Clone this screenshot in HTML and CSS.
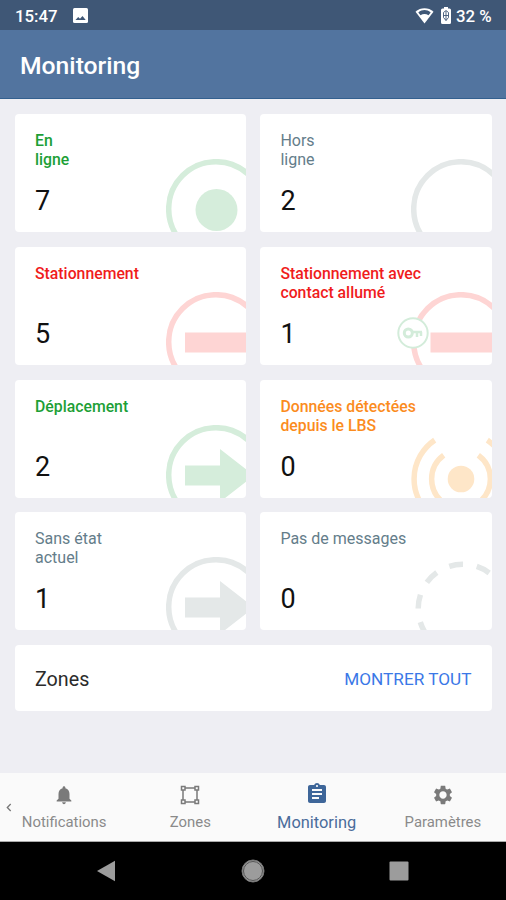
FILE: index.html
```html
<!DOCTYPE html>
<html lang="fr">
<head>
    <meta charset="UTF-8">
    <meta name="viewport" content="width=device-width, initial-scale=1.0">
    <title>Monitoring</title>
    <link rel="stylesheet" href="styles.css">
</head>
<body>
    <div class="status-bar">
        <span class="clock">15:47</span>
        <svg class="picture-icon" width="15" height="15" viewBox="0 0 15 15">
            <rect width="15" height="15" rx="1.5" fill="#fff"/>
            <path d="M2.5 12l2.700-3 1.800 1.700L9.500 8l3.200 4z" fill="#3f5776"/>
        </svg>
        <div class="status-right">
            <svg width="19" height="17" viewBox="0 0 19 17">
                <path d="M9.500 16.500L.5 4.800C5.500.2 13.500.2 18.500 4.800z" fill="#fff"/>
                <path d="M3.300 5.500c4-3.200 8.400-3.200 12.400 0l-2.200 2.700c-2.500-1.700-5.500-1.700-8 0z" fill="#3f5776"/>
            </svg>
            <svg class="battery" width="10" height="17" viewBox="0 0 10 17">
                <path d="M3 0h4v1.500h1.500q1.500 0 1.500 1.500v12.500q0 1.500-1.500 1.500h-7q-1.500 0-1.500-1.500v-12.500q0-1.500 1.500-1.500h1.500z" fill="#fff"/>
                <path d="M5 4v9.500M2.500 8.500h5M2.500 5.500v5l2.500 3 2.500-3v-5L5 3.500z" fill="none" stroke="#3f5776" stroke-width=".9"/>
            </svg>
            <span>32 %</span>
        </div>
    </div>

    <header class="header">
        <h1>Monitoring</h1>
    </header>

    <main class="content">
        <div class="cards">
            <div class="card green">
                <p class="label">En<br>ligne</p>
                <p class="value">7</p>
                <svg class="mark" viewBox="0 0 100 100">
                    <circle class="ring" cx="50" cy="50" r="47.300"/>
                    <circle cx="50.500" cy="51" r="21"/>
                </svg>
            </div>
            <div class="card gray">
                <p class="label">Hors<br>ligne</p>
                <p class="value">2</p>
                <svg class="mark" viewBox="0 0 100 100">
                    <circle class="ring" cx="50" cy="50" r="47.300"/>
                </svg>
            </div>
            <div class="card red">
                <p class="label">Stationnement</p>
                <p class="value">5</p>
                <svg class="mark" viewBox="0 0 100 100">
                    <circle class="ring" cx="50" cy="50" r="47.300"/>
                    <rect x="19" y="40.500" width="62" height="20"/>
                </svg>
            </div>
            <div class="card red">
                <p class="label">Stationnement avec<br>contact allumé</p>
                <p class="value">1</p>
                <svg class="mark" viewBox="0 0 100 100">
                    <circle class="ring" cx="50" cy="50" r="47.300"/>
                    <rect x="19.500" y="40.500" width="62" height="20"/>
                </svg>
                <svg class="key" viewBox="0 0 32 32">
                    <circle cx="16" cy="16" r="14.700" fill="#fff" stroke-width="2"/>
                    <circle cx="11.300" cy="16" r="4" fill="none" stroke-width="3"/>
                    <path d="M15 15h10M20 15v5M24 15v4" fill="none" stroke-width="2.500"/>
                </svg>
            </div>
            <div class="card green">
                <p class="label">Déplacement</p>
                <p class="value">2</p>
                <svg class="mark" viewBox="0 0 100 100">
                    <circle class="ring" cx="50" cy="50" r="47.300"/>
                    <path d="M19 40.500h35v-16.500l34 26.500-34 26.500v-16.500h-35z"/>
                </svg>
            </div>
            <div class="card orange">
                <p class="label">Données détectées<br>depuis le LBS</p>
                <p class="value">0</p>
                <svg class="mark" viewBox="0 0 100 100">
                    <circle cx="50" cy="54" r="13.300"/>
                    <path class="ring" d="M32.700 30.200a29.500 29.500 0 0 0 0 47.600M67.300 30.200a29.500 29.500 0 0 1 0 47.600"/>
                    <path class="ring" d="M23.700 15.100a47 47 0 0 0 0 77.800M76.300 15.100a47 47 0 0 1 0 77.800"/>
                </svg>
            </div>
            <div class="card gray">
                <p class="label">Sans état<br>actuel</p>
                <p class="value">1</p>
                <svg class="mark" viewBox="0 0 100 100">
                    <circle class="ring" cx="50" cy="50" r="47.300"/>
                    <path d="M19 40.500h35v-16.500l34 26.500-34 26.500v-16.500h-35z"/>
                </svg>
            </div>
            <div class="card gray">
                <p class="label">Pas de messages</p>
                <p class="value">0</p>
                <svg class="mark" viewBox="0 0 100 100">
                    <circle class="ring" cx="51.700" cy="51.700" r="44.500" stroke-dasharray="14 13.960"/>
                </svg>
            </div>
        </div>

        <div class="zones">
            <span>Zones</span>
            <a class="show-all">MONTRER TOUT</a>
        </div>
    </main>

    <nav class="tabs">
        <svg class="chevron" width="6" height="9" viewBox="0 0 6 9">
            <path d="M4.700 1L1.300 4.500l3.400 3.500" fill="none" stroke="#777" stroke-width="1.300"/>
        </svg>
        <div class="tab">
            <svg width="22" height="22" viewBox="0 0 24 24">
                <path d="M12 22c1.100 0 2-.9 2-2h-4c0 1.100.9 2 2 2zm6-6v-5c0-3.070-1.640-5.640-4.500-6.320V4c0-.83-.67-1.500-1.500-1.500s-1.500.67-1.500 1.500v.68C7.630 5.360 6 7.920 6 11v5l-2 2v1h16v-1l-2-2z"/>
            </svg>
            <span>Notifications</span>
        </div>
        <div class="tab">
            <svg width="22" height="22" viewBox="0 0 22 22">
                <g fill="none" stroke="#7a7a7a" stroke-width="1.500">
                    <path d="M6 4h10M6 18h10M4 6v10M18 6v10"/>
                    <rect x="2.500" y="2.500" width="3.500" height="3.500"/>
                    <rect x="16" y="2.500" width="3.500" height="3.500"/>
                    <rect x="2.500" y="16" width="3.500" height="3.500"/>
                    <rect x="16" y="16" width="3.500" height="3.500"/>
                </g>
            </svg>
            <span>Zones</span>
        </div>
        <div class="tab active">
            <svg width="24" height="24" viewBox="0 0 24 24">
                <path d="M19 3h-4.180C14.400 1.840 13.300 1 12 1c-1.300 0-2.400.84-2.820 2H5c-1.100 0-2 .9-2 2v14c0 1.100.9 2 2 2h14c1.100 0 2-.9 2-2V5c0-1.100-.9-2-2-2zm-7 0c.55 0 1 .45 1 1s-.45 1-1 1-1-.45-1-1 .45-1 1-1zm2 14H7v-2h7v2zm3-4H7v-2h10v2zm0-4H7V7h10v2z"/>
            </svg>
            <span>Monitoring</span>
        </div>
        <div class="tab">
            <svg width="22" height="22" viewBox="0 0 24 24">
                <path d="M19.430 12.980c.04-.32.07-.64.07-.98s-.03-.66-.07-.98l2.110-1.650c.19-.15.24-.42.12-.64l-2-3.460c-.12-.22-.39-.3-.61-.22l-2.490 1c-.52-.4-1.080-.73-1.690-.98l-.38-2.650C14.460 2.180 14.250 2 14 2h-4c-.25 0-.46.18-.49.42l-.38 2.650c-.61.25-1.170.59-1.690.98l-2.490-1c-.23-.09-.49 0-.61.22l-2 3.460c-.13.22-.07.49.12.64l2.110 1.650c-.04.32-.07.65-.07.98s.03.66.07.98l-2.110 1.650c-.19.15-.24.42-.12.64l2 3.460c.12.22.39.3.61.22l2.490-1c.52.4 1.080.73 1.690.98l.38 2.650c.03.24.24.42.49.42h4c.25 0 .46-.18.49-.42l.38-2.650c.61-.25 1.170-.59 1.690-.98l2.490 1c.23.09.49 0 .61-.22l2-3.460c.12-.22.07-.49-.12-.64l-2.110-1.650zM12 16c-2.200 0-4-1.800-4-4s1.800-4 4-4 4 1.800 4 4-1.800 4-4 4z"/>
            </svg>
            <span>Paramètres</span>
        </div>
    </nav>

    <div class="system-nav">
        <svg width="20" height="22" viewBox="0 0 20 22">
            <path d="M1 11L19 .7v20.600z" fill="#9c9c9c"/>
        </svg>
        <svg width="24" height="24" viewBox="0 0 24 24">
            <circle cx="12" cy="12" r="11" fill="#9c9c9c" stroke="#777" stroke-width="1"/>
            <circle cx="12" cy="12" r="9.500" fill="#9c9c9c" stroke="#555" stroke-width="1"/>
        </svg>
        <svg width="20" height="20" viewBox="0 0 20 20">
            <rect x=".5" y=".5" width="19" height="19" rx="1" fill="#9c9c9c"/>
        </svg>
    </div>
</body>
</html>
```
FILE: styles.css
```css
* {
    box-sizing: border-box;
}
body {
    margin: 0;
    height: 900px;
    display: flex;
    flex-direction: column;
    font-family: Roboto, sans-serif;
    background-color: #eeeef3;
    overflow: hidden;
}
h1, p {
    margin: 0;
}
svg {
    display: block;
    flex: none;
}
.status-bar {
    height: 30px;
    display: flex;
    align-items: center;
    padding: 1px 14.500px 0 15px;
    background-color: #3f5776;
    color: #fff;
    font-size: 16.800px;
    font-weight: 500;
}
.picture-icon {
    margin-left: 15px;
}
.status-right {
    display: flex;
    align-items: center;
    margin-left: auto;
}
.battery {
    margin: 0 5px 0 7px;
}
.header {
    height: 69px;
    display: flex;
    align-items: center;
    padding: 3px 20px 0;
    background-color: #52749f;
    border-bottom: 1px solid #33608f;
    color: #fff;
}
.header h1 {
    font-size: 24.700px;
    font-weight: 500;
}
.content {
    flex: 1;
    padding: 15.200px 14.500px 0 15px;
}
.cards {
    display: grid;
    grid-template-columns: 1fr 1fr;
    gap: 14.700px 14.300px;
}
.card {
    position: relative;
    height: 118px;
    padding: 17px 20px 0;
    background-color: #fff;
    border-radius: 4px;
    overflow: hidden;
}
.label {
    height: 50px;
    font-size: 15.800px;
    font-weight: 500;
    line-height: 19px;
    white-space: nowrap;
}
.value {
    font-size: 27px;
    line-height: 40px;
    color: #111;
}
.mark {
    position: absolute;
    top: 45px;
    right: -19.700px;
    width: 100px;
    height: 100px;
}
.ring {
    fill: none;
    stroke-width: 5.500;
}
.key {
    position: absolute;
    top: 70px;
    left: 136.500px;
    width: 32px;
    height: 32px;
    stroke: #d3ecda;
}
.green .label {
    color: #1d9f36;
}
.green .mark {
    fill: #d5eddb;
    stroke: #d5eddb;
}
.gray .label {
    color: #647d8a;
    font-size: 16px;
    font-weight: 400;
}
.gray .mark {
    fill: #e4e8e8;
    stroke: #e4e8e8;
}
.red .label {
    color: #f01c1c;
}
.red .mark {
    fill: #fed5d4;
    stroke: #fed5d4;
}
.orange .label {
    color: #fb8c1e;
}
.orange .mark {
    fill: #fee6c8;
    stroke: #fee6c8;
}
.mark > :not(.ring) {
    stroke: none;
}
.mark > .ring {
    fill: none;
}
.zones {
    height: 66px;
    margin-top: 15px;
    padding: 2px 20px 0;
    display: flex;
    align-items: center;
    justify-content: space-between;
    background-color: #fff;
    border-radius: 4px;
    font-size: 19.700px;
    color: #2b2b2b;
}
.show-all {
    font-size: 17.200px;
    color: #3b78e7;
}
.tabs {
    position: relative;
    height: 69px;
    display: flex;
    padding-left: 1px;
    background-color: #fafafa;
    border-bottom: 1px solid #aaa;
}
.chevron {
    position: absolute;
    left: 6px;
    top: 30px;
}
.tab {
    flex: 1;
    display: flex;
    flex-direction: column;
    align-items: center;
    padding-top: 11px;
    font-size: 14.900px;
    color: #8a8a8a;
}
.tab svg {
    fill: #7a7a7a;
}
.tab span {
    margin-top: 7px;
    line-height: 18px;
}
.tab.active {
    padding-top: 9px;
    font-size: 16.400px;
    color: #4a6c9b;
}
.tab.active svg {
    fill: #3e6699;
}
.tab.active span {
    margin-top: 8px;
}
.system-nav {
    height: 58px;
    display: flex;
    align-items: center;
    justify-content: space-between;
    padding: 0 97px 0 96px;
    background-color: #000;
}
```
